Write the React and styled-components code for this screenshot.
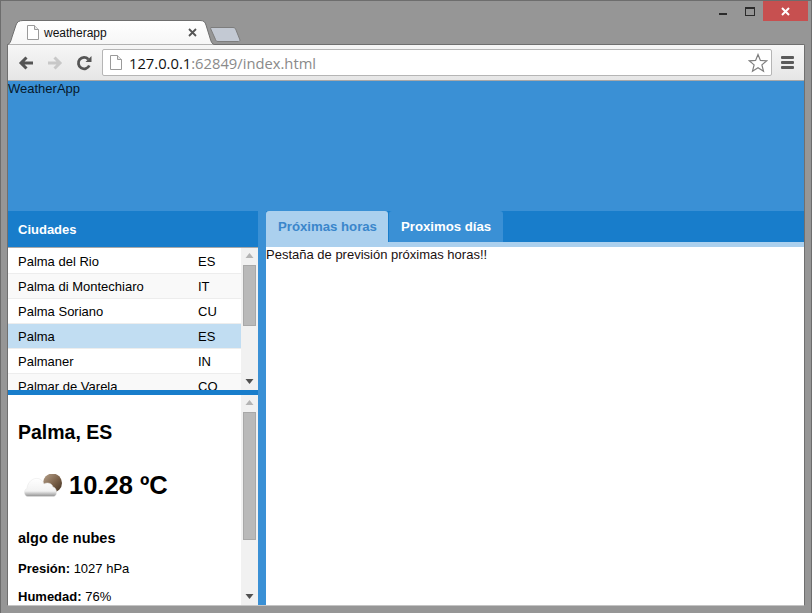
import styled, { createGlobalStyle } from "styled-components"

const cities = [
    { name: "Palma del Rio", country: "ES" },
    { name: "Palma di Montechiaro", country: "IT", alt: true },
    { name: "Palma Soriano", country: "CU" },
    { name: "Palma", country: "ES", selected: true },
    { name: "Palmaner", country: "IN" },
    { name: "Palmar de Varela", country: "CO", alt: true },
]

export default function App() {
    return (
        <>
            <GlobalStyle />
            <Frame>
                <TitleBar>
                    <ActiveTab>
                        <TabShape width="208" height="25" viewBox="0 0 208 25">
                            <defs>
                                <linearGradient id="tabFill" x1="0" y1="0" x2="0" y2="1">
                                    <stop offset="0" stopColor="#ffffff" />
                                    <stop offset="1" stopColor="#f6f6f6" />
                                </linearGradient>
                            </defs>
                            <path d="M0 25 C3 24 4 21 5 17 L9 5 C10 2 12 0.5 16 0.5 L193 0.5 C197 0.5 198 2 199 5 L203 18 C204 22 205 24 208 25 Z" fill="url(#tabFill)" stroke="#6f6f6f" />
                        </TabShape>
                        <PageIcon />
                        <TabTitle>weatherapp</TabTitle>
                        <TabClose>
                            <svg width="9" height="9" viewBox="0 0 9 9">
                                <path d="M1 1 L8 8 M8 1 L1 8" stroke="#555" strokeWidth="1.8" />
                            </svg>
                        </TabClose>
                    </ActiveTab>
                    <NewTab>
                        <svg width="31" height="15" viewBox="0 0 31 15">
                            <path d="M1 0.5 L23 0.5 C25 0.5 25.5 1.5 26 3 L30 13 C30 14 29.5 14.5 28.5 14.5 L8 14.5 C6.5 14.5 6 14 5.5 12.5 L0.8 2 C0.5 1 0.5 0.5 1 0.5 Z" fill="#c3c9d3" stroke="#7d7d7d" />
                        </svg>
                    </NewTab>
                    <WindowControls>
                        <MinButton />
                        <MaxButton />
                        <CloseButton>
                            <svg width="9" height="9" viewBox="0 0 9 9">
                                <path d="M1 1 L8 8 M8 1 L1 8" stroke="#fff" strokeWidth="2" />
                            </svg>
                        </CloseButton>
                    </WindowControls>
                </TitleBar>
                <Window>
                    <Toolbar>
                        <NavIcon viewBox="0 0 16 16">
                            <path d="M15 8 H3.5 M8.5 2.5 L3 8 L8.5 13.5" fill="none" stroke="#555" strokeWidth="3" />
                        </NavIcon>
                        <NavIcon viewBox="0 0 16 16">
                            <path d="M1 8 H12.5 M7.5 2.5 L13 8 L7.5 13.5" fill="none" stroke="#c8c8c8" strokeWidth="3" />
                        </NavIcon>
                        <NavIcon viewBox="0 0 16 16">
                            <path d="M13.3 10.5 A5.7 5.7 0 1 1 12.3 4.2" fill="none" stroke="#555" strokeWidth="2.8" />
                            <path d="M9.5 7 L15.5 7 L15.5 1 Z" fill="#555" />
                        </NavIcon>
                        <AddressBar>
                            <PageIcon />
                            <Url>127.0.0.1<UrlRest>:62849/index.html</UrlRest></Url>
                            <StarIcon viewBox="0 0 20 20">
                                <path d="M10 1.5 L12.4 7.4 L18.8 7.8 L13.9 11.9 L15.5 18.2 L10 14.8 L4.5 18.2 L6.1 11.9 L1.2 7.8 L7.6 7.4 Z" fill="#fff" stroke="#7e7e7e" strokeWidth="1.2" />
                            </StarIcon>
                        </AddressBar>
                        <Menu>
                            <MenuLine />
                            <MenuLine />
                            <MenuLine />
                        </Menu>
                    </Toolbar>
                    <Page>
                        <Header>WeatherApp</Header>
                        <Main>
                            <Sidebar>
                                <PanelTitle>Ciudades</PanelTitle>
                                <CityPane>
                                    <CityList>
                                        {cities.map((city) => (
                                            <CityRow key={city.name} $alt={city.alt} $selected={city.selected}>
                                                <CityName>{city.name}</CityName>
                                                <span>{city.country}</span>
                                            </CityRow>
                                        ))}
                                    </CityList>
                                    <Scrollbar $thumbTop={0} $thumbHeight={61} />
                                </CityPane>
                                <Divider />
                                <DetailPane>
                                    <Detail>
                                        <CityTitle>Palma, ES</CityTitle>
                                        <Current>
                                            <svg width="40" height="23" viewBox="0 0 40 23">
                                                <defs>
                                                    <linearGradient id="moon" x1="0" y1="0" x2="1" y2="1">
                                                        <stop offset="0" stopColor="#b9a48e" />
                                                        <stop offset="0.55" stopColor="#7a6048" />
                                                        <stop offset="1" stopColor="#3f2f20" />
                                                    </linearGradient>
                                                    <linearGradient id="cloud" x1="0" y1="0" x2="0" y2="1">
                                                        <stop offset="0" stopColor="#ffffff" />
                                                        <stop offset="0.7" stopColor="#f2f2f2" />
                                                        <stop offset="1" stopColor="#8f8f8f" />
                                                    </linearGradient>
                                                </defs>
                                                <circle cx="29.5" cy="9" r="9.5" fill="url(#moon)" />
                                                <path d="M5 22.5 C1 22.5 0 16 4 14.5 C4.5 8 10 3.5 15 4.5 C18 5 20 7 21 10 C24 8 29 9 30 13 C34 13.5 35 21.5 31 22.5 Z" fill="url(#cloud)" stroke="#e6e6e6" strokeWidth="0.5" />
                                            </svg>
                                            <Temperature>10.28 ºC</Temperature>
                                        </Current>
                                        <Summary>algo de nubes</Summary>
                                        <Stat><b>Presión:</b> 1027 hPa</Stat>
                                        <Stat $close><b>Humedad:</b> 76%</Stat>
                                    </Detail>
                                    <Scrollbar $thumbTop={0} $thumbHeight={128} />
                                </DetailPane>
                            </Sidebar>
                            <Content>
                                <TabBar>
                                    <ForecastTab $active $width={122}>Próximas horas</ForecastTab>
                                    <ForecastTab $width={114}>Proximos días</ForecastTab>
                                </TabBar>
                                <TabStrip />
                                <TabBody>Pestaña de previsión próximas horas!!</TabBody>
                            </Content>
                        </Main>
                    </Page>
                </Window>
            </Frame>
        </>
    )
}

function PageIcon() {
    return (
        <PageGlyph width="12" height="15" viewBox="0 0 12 15">
            <path d="M0.5 0.5 H7.5 L11.5 4.5 V14.5 H0.5 Z" fill="#fff" stroke="#9a9a9a" />
            <path d="M7.5 0.5 V4.5 H11.5" fill="#e8e8e8" stroke="#9a9a9a" />
        </PageGlyph>
    )
}

function Scrollbar({ $thumbTop, $thumbHeight }) {
    return (
        <Track>
            <Arrow viewBox="0 0 17 17"><path d="M8.5 5 L12.5 10 H4.5 Z" fill="#b4b4b4" /></Arrow>
            <Rail>
                <Thumb $top={$thumbTop} $height={$thumbHeight} />
            </Rail>
            <Arrow viewBox="0 0 17 17"><path d="M8.5 11 L4.5 6 H12.5 Z" fill="#505050" /></Arrow>
        </Track>
    )
}

const GlobalStyle = createGlobalStyle`
    html, body {
        margin: 0;
        padding: 0;
        width: 812px;
        height: 613px;
        overflow: hidden;
    }
    body {
        font-family: "Liberation Sans", Arial, sans-serif;
        font-size: 13px;
        color: #000;
    }
    * {
        box-sizing: border-box;
    }
`

const Frame = styled.div`
    width: 812px;
    height: 613px;
    background: #969696;
    border: 1px solid #6d6d6d;
    border-bottom: 0;
    padding: 0 6px 7px 6px;
    display: flex;
    flex-direction: column;
`

const TitleBar = styled.div`
    height: 43px;
    display: flex;
    align-items: flex-end;
    position: relative;
    flex-shrink: 0;
`

const PageGlyph = styled.svg`
    position: relative;
    flex-shrink: 0;
`

const ActiveTab = styled.div`
    position: relative;
    width: 208px;
    height: 25px;
    padding: 0 0 0 20px;
    display: flex;
    align-items: center;
    z-index: 1;
    margin-bottom: -1px;
`

const TabShape = styled.svg`
    position: absolute;
    left: 0;
    top: 0;
`

const TabTitle = styled.span`
    position: relative;
    margin-left: 5px;
    font-size: 12px;
    color: #111;
    flex: 1;
`

const TabClose = styled.span`
    position: relative;
    width: 9px;
    height: 9px;
    margin-right: 18px;
    display: flex;
`

const NewTab = styled.div`
    height: 15px;
    margin-left: -5px;
    margin-bottom: 2px;
    display: flex;
`

const WindowControls = styled.div`
    position: absolute;
    right: -3px;
    top: 0;
    display: flex;
    align-items: flex-start;
`

const MinButton = styled.div`
    width: 8px;
    height: 2px;
    margin-top: 12px;
    margin-right: 18px;
    background: #2b2b2b;
`

const MaxButton = styled.div`
    width: 10px;
    height: 9px;
    margin-top: 6px;
    margin-right: 8px;
    border: 1px solid #2b2b2b;
    border-top-width: 2px;
`

const CloseButton = styled.div`
    width: 45px;
    height: 20px;
    background: #c75050;
    display: flex;
    align-items: center;
    justify-content: center;
`

const Window = styled.div`
    flex: 1;
    min-height: 0;
    display: flex;
    flex-direction: column;
    border: 1px solid #6f6f6f;
    border-bottom-color: #c4c4c4;
    border-radius: 2px 2px 0 0;
`

const Toolbar = styled.div`
    height: 36px;
    flex-shrink: 0;
    display: flex;
    align-items: center;
    gap: 13px;
    padding: 0 10px 0 10px;
    background: linear-gradient(#f6f6f6, #e6e6e6);
    border-bottom: 1px solid #a8a8a8;
`

const NavIcon = styled.svg`
    width: 16px;
    height: 16px;
    flex-shrink: 0;
`

const AddressBar = styled.div`
    flex: 1;
    height: 27px;
    margin-left: -3px;
    margin-right: -4px;
    display: flex;
    align-items: center;
    padding: 0 3px 0 7px;
    background: #fff;
    border: 1px solid #b5b5b5;
    border-radius: 2px;
`

const Url = styled.span`
    flex: 1;
    margin-left: 7px;
    font-family: "Open Sans", Arial, sans-serif;
    font-size: 14.75px;
    color: #111;
`

const UrlRest = styled.span`
    color: #8a8a8a;
`

const StarIcon = styled.svg`
    width: 20px;
    height: 20px;
`

const Menu = styled.div`
    width: 13px;
    display: flex;
    flex-direction: column;
    gap: 2px;
`

const MenuLine = styled.div`
    height: 3px;
    background: #5a5a5a;
    border-radius: 1px;
`

const Page = styled.div`
    flex: 1;
    min-height: 0;
    display: flex;
    flex-direction: column;
    background: #3a90d5;
`

const Header = styled.div`
    height: 130px;
    flex-shrink: 0;
    line-height: 15px;
    color: #06192b;
`

const Main = styled.div`
    flex: 1;
    min-height: 0;
    display: flex;
    gap: 8px;
`

const Sidebar = styled.div`
    width: 250px;
    display: flex;
    flex-direction: column;
    flex-shrink: 0;
`

const PanelTitle = styled.div`
    height: 37px;
    flex-shrink: 0;
    padding-left: 10px;
    display: flex;
    align-items: center;
    font-size: 13px;
    font-weight: bold;
    color: #fff;
    background: #187dcb;
    border-bottom: 1px solid #a9a9a9;
`

const CityPane = styled.div`
    height: 142px;
    flex-shrink: 0;
    display: flex;
    overflow: hidden;
    background: #fff;
`

const CityList = styled.div`
    flex: 1;
    min-width: 0;
    padding-top: 1px;
`

const CityRow = styled.div`
    height: 25px;
    display: flex;
    align-items: center;
    padding-left: 10px;
    font-size: 13px;
    border-bottom: 1px solid #ededed;
    background: ${(p) => (p.$selected ? "#c1ddf2" : p.$alt ? "#f9f9f9" : "#fff")};
`

const CityName = styled.span`
    width: 180px;
`

const Divider = styled.div`
    height: 5px;
    flex-shrink: 0;
    background: #187dcb;
`

const DetailPane = styled.div`
    flex: 1;
    min-height: 0;
    display: flex;
    background: #fff;
    overflow: hidden;
`

const Detail = styled.div`
    flex: 1;
    min-width: 0;
    padding: 25px 10px 0;
`

const CityTitle = styled.div`
    font-size: 19.5px;
    line-height: 24px;
    font-weight: bold;
`

const Current = styled.div`
    display: flex;
    align-items: center;
    gap: 6px;
    margin-top: 26px;
    padding-left: 5px;
`

const Temperature = styled.div`
    font-size: 25.5px;
    line-height: 30px;
    font-weight: bold;
`

const Summary = styled.div`
    margin-top: 30px;
    font-size: 14.5px;
    line-height: 17px;
    font-weight: bold;
`

const Stat = styled.div`
    margin-top: ${(p) => (p.$close ? "13px" : "14px")};
    font-size: 13px;
    line-height: 15px;

    b {
        font-weight: bold;
    }
`

const Track = styled.div`
    width: 17px;
    height: 100%;
    flex-shrink: 0;
    display: flex;
    flex-direction: column;
    background: #f1f1f1;
`

const Arrow = styled.svg`
    width: 17px;
    height: 17px;
    flex-shrink: 0;
`

const Rail = styled.div`
    flex: 1;
    min-height: 0;
    padding: 0 2px;
`

const Thumb = styled.div`
    margin-top: ${(p) => p.$top}px;
    height: ${(p) => p.$height}px;
    background: #b9b9b9;
    border: 1px solid #a8a8a8;
`

const Content = styled.div`
    flex: 1;
    min-width: 0;
    display: flex;
    flex-direction: column;
`

const TabBar = styled.div`
    height: 31px;
    flex-shrink: 0;
    display: flex;
    background: #187dcb;
`

const ForecastTab = styled.div`
    width: ${(p) => p.$width}px;
    padding-left: 12px;
    margin-right: ${(p) => (p.$active ? "1px" : "0")};
    display: flex;
    align-items: center;
    font-size: 13.2px;
    font-weight: bold;
    border-radius: 3px 3px 0 0;
    color: ${(p) => (p.$active ? "#3a86cb" : "#fff")};
    background: ${(p) => (p.$active ? "#abd0ee" : "#3a90d5")};
`

const TabStrip = styled.div`
    height: 5px;
    flex-shrink: 0;
    background: #abd0ee;
`

const TabBody = styled.div`
    flex: 1;
    min-height: 0;
    background: #fff;
    line-height: 15px;
    color: #1a0f0f;
`
